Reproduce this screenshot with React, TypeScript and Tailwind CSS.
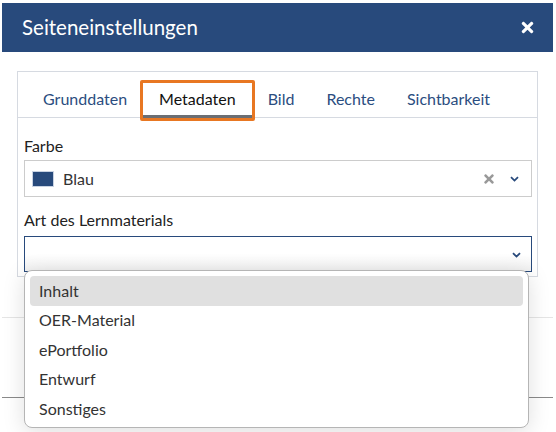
import { FaTimes } from "react-icons/fa"

function Chevron({ className }: { className?: string }) {
  return (
    <svg width="9" height="6" viewBox="0 0 9 6" className={className}>
      <path d="M1 1.2 L4.5 4.6 L8 1.2" fill="none" stroke="currentColor" strokeWidth="1.8" />
    </svg>
  )
}

const tabs = ["Grunddaten", "Metadaten", "Bild", "Rechte", "Sichtbarkeit"]
const options = ["Inhalt", "OER-Material", "ePortfolio", "Entwurf", "Sonstiges"]

export default function App() {
  return (
    <div className="relative w-[556px] h-[432px] bg-white overflow-hidden font-['Lato',sans-serif]">
      <div className="ml-[2px] mt-[3px] w-[551px] h-[395px] bg-white border-b border-[#8a8a8a] flex flex-col">
        {/* Header */}
        <div className="h-[49px] bg-[#284a7c] flex items-center justify-between pl-[20px] pr-[17px]">
          <span className="text-white text-[20.5px]">Seiteneinstellungen</span>
          <FaTimes className="text-white" size={17} />
        </div>

        {/* Body */}
        <div className="px-[15px] pt-[19px] h-[266px] border-b border-[#e5e5e5]">
          <div className="border border-[#d6dae1]">
            <div className="flex pl-[9px] pt-[11px] border-b border-[#d6dae1]">
              {tabs.map((t) =>
                t === "Metadaten" ? (
                  <div key={t} className="relative -mb-px">
                    <div className="absolute -inset-[3px] border-[3px] border-[#e87722] rounded-[2px]" />
                    <div className="h-[35px] px-[16px] flex items-center border-b-[3px] border-[#6b6e73] text-[16px] text-[#111]">
                      {t}
                    </div>
                  </div>
                ) : (
                  <div
                    key={t}
                    className="h-[35px] px-[16px] flex items-center text-[16px] text-[#2b4d80] -mb-px pb-[3px]"
                  >
                    {t}
                  </div>
                )
              )}
            </div>

            <div className="pl-[6px] pr-[5px] pt-[16px] pb-[4px]">
              <div className="text-[16px] text-[#222] h-[24px] leading-[24px]">Farbe</div>
              <div className="mt-[2px] h-[37px] border border-[#cccccc] flex items-center pl-[7px] pr-[12px]">
                <div className="w-[22px] h-[16px] bg-[#284a7c] border border-[#c9d3e3]" />
                <span className="ml-[9px] text-[16px] text-[#333]">Blau</span>
                <div className="flex-1" />
                <FaTimes className="text-[#999]" size={14} />
                <Chevron className="ml-[14px] text-[#284a7c]" />
              </div>

              <div className="mt-[11px] mb-[4px] text-[16px] text-[#222] h-[24px] leading-[24px]">
                Art des Lernmaterials
              </div>
              <div className="relative">
                <div className="h-[36px] border border-[#284a7c] bg-gradient-to-b from-white from-50% to-[#f1f1f1] flex items-center justify-end pr-[10px]">
                  <Chevron className="text-[#284a7c] mt-[2px]" />
                </div>

                {/* Dropdown */}
                <div className="absolute left-0 top-[34px] w-[505px] bg-white border border-[#b5b5b5] rounded-[8px] shadow-[0_4px_22px_rgba(0,0,0,0.13)] pt-[5px] pb-[3px] px-[5px] z-10">
                  {options.map((o, i) => (
                    <div
                      key={o}
                      className={`h-[29.5px] flex items-center pl-[9px] text-[16px] text-[#333] rounded-[4px] ${
                        i === 0 ? "bg-[#e0e0e0]" : ""
                      }`}
                    >
                      {o}
                    </div>
                  ))}
                </div>
              </div>
            </div>
          </div>
        </div>
        <div className="flex-1" />
      </div>
    </div>
  )
}
